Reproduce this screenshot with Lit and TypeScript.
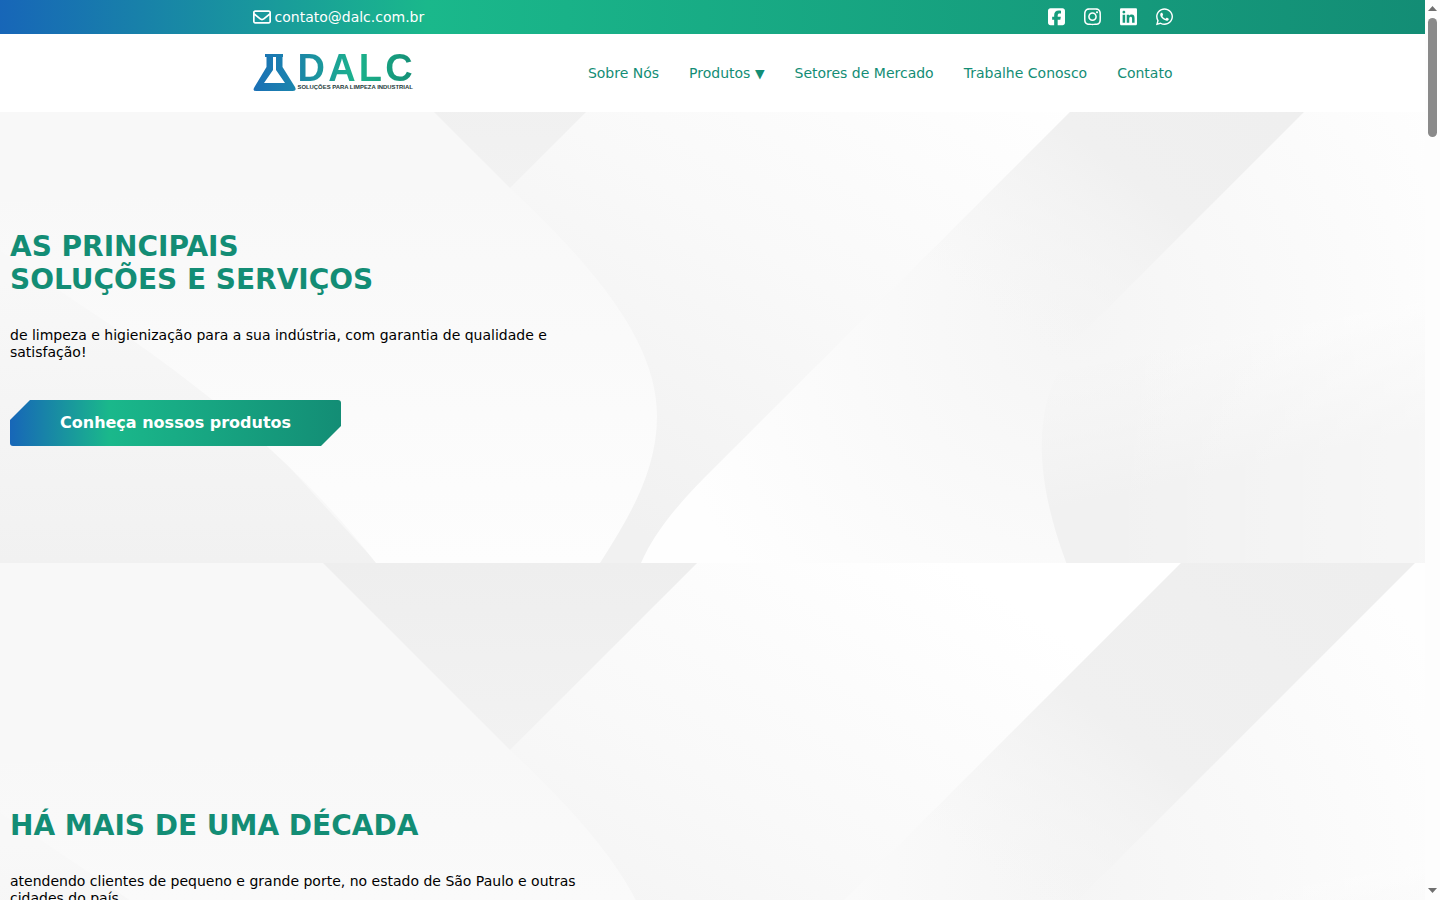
import { LitElement, html, css, svg } from "lit";
import { customElement } from "lit/decorators.js";

const ICONS = {
  envelope: { vb: "0 0 512 512", d: "M64 112c-8.8 0-16 7.2-16 16v22.1L220.5 291.7c20.7 17 50.4 17 71.1 0L464 150.1V128c0-8.8-7.2-16-16-16H64zM48 212.2V384c0 8.8 7.2 16 16 16H448c8.8 0 16-7.2 16-16V212.2L322 328.8c-38.4 31.5-93.7 31.5-132 0L48 212.2zM0 128C0 92.7 28.7 64 64 64H448c35.3 0 64 28.7 64 64V384c0 35.3-28.7 64-64 64H64c-35.3 0-64-28.7-64-64V128z" },
  facebook: { vb: "0 0 448 512", d: "M64 32C28.7 32 0 60.7 0 96V416c0 35.3 28.7 64 64 64h98.2V334.2H109.4V256h52.8V222.3c0-87.1 39.4-127.4 125-127.4c16.2 0 44.2 3.2 55.7 6.4V172c-6-.6-16.5-1-29.6-1c-42 0-58.2 15.9-58.2 57.2V256h83.6l-14.4 78.2H255V480H384c35.3 0 64-28.7 64-64V96c0-35.3-28.7-64-64-64H64z" },
  instagram: { vb: "0 0 448 512", d: "M224.1 141c-63.6 0-114.9 51.3-114.9 114.9s51.3 114.9 114.9 114.9S339 319.5 339 255.9 287.7 141 224.1 141zm0 189.6c-41.1 0-74.7-33.5-74.7-74.7s33.5-74.7 74.7-74.7 74.7 33.5 74.7 74.7-33.6 74.7-74.7 74.7zm146.4-194.3c0 14.9-12 26.8-26.8 26.8-14.9 0-26.8-12-26.8-26.8s12-26.8 26.8-26.8 26.8 12 26.8 26.8zm76.1 27.2c-1.7-35.9-9.9-67.7-36.2-93.9-26.2-26.2-58-34.4-93.9-36.2-37-2.1-147.9-2.1-184.9 0-35.8 1.7-67.6 9.9-93.9 36.1s-34.4 58-36.2 93.9c-2.1 37-2.1 147.9 0 184.9 1.7 35.9 9.9 67.7 36.2 93.9s58 34.4 93.9 36.2c37 2.1 147.9 2.1 184.9 0 35.9-1.7 67.7-9.9 93.9-36.2 26.2-26.2 34.4-58 36.2-93.9 2.1-37 2.1-147.8 0-184.8zM398.8 388c-7.8 19.6-22.9 34.7-42.6 42.6-29.5 11.7-99.5 9-132.1 9s-102.7 2.6-132.1-9c-19.6-7.8-34.7-22.9-42.6-42.6-11.7-29.5-9-99.5-9-132.1s-2.6-102.7 9-132.1c7.8-19.6 22.9-34.7 42.6-42.6 29.5-11.7 99.5-9 132.1-9s102.7-2.6 132.1 9c19.6 7.8 34.7 22.9 42.6 42.6 11.7 29.5 9 99.5 9 132.1s2.7 102.7-9 132.1z" },
  linkedin: { vb: "0 0 448 512", d: "M416 32H31.9C14.3 32 0 46.5 0 64.3v383.4C0 465.5 14.3 480 31.9 480H416c17.6 0 32-14.5 32-32.3V64.3c0-17.8-14.4-32.3-32-32.3zM135.4 416H69V202.2h66.5V416zm-33.2-243c-21.3 0-38.5-17.3-38.5-38.5S80.9 96 102.2 96c21.2 0 38.5 17.3 38.5 38.5 0 21.3-17.2 38.5-38.5 38.5zm282.1 243h-66.4V312c0-24.8-.5-56.7-34.5-56.7-34.6 0-39.9 27-39.9 54.9V416h-66.4V202.2h63.7v29.2h.9c8.9-16.8 30.6-34.5 62.9-34.5 67.2 0 79.7 44.3 79.7 101.9V416z" },
  whatsapp: { vb: "0 0 448 512", d: "M380.9 97.1C339 55.1 283.2 32 223.9 32c-122.4 0-222 99.6-222 222 0 39.1 10.2 77.3 29.6 111L0 480l117.7-30.9c32.4 17.7 68.9 27 106.1 27h.1c122.3 0 224.1-99.6 224.1-222 0-59.3-25.2-115-67.1-157zm-157 341.6c-33.2 0-65.7-8.9-94-25.7l-6.7-4-69.8 18.3L72 359.2l-4.4-7c-18.5-29.4-28.2-63.3-28.2-98.2 0-101.7 82.8-184.5 184.6-184.5 49.3 0 95.6 19.2 130.4 54.1 34.8 34.9 56.2 81.2 56.1 130.5 0 101.8-84.9 184.6-186.6 184.6zm101.2-138.2c-5.5-2.8-32.8-16.2-37.9-18-5.1-1.9-8.8-2.8-12.5 2.8-3.7 5.6-14.3 18-17.6 21.8-3.2 3.7-6.5 4.2-12 1.4-32.6-16.3-54-29.1-75.5-66-5.7-9.8 5.7-9.1 16.3-30.3 1.8-3.7.9-6.9-.5-9.7-1.4-2.8-12.5-30.1-17.1-41.2-4.5-10.8-9.1-9.3-12.5-9.5-3.2-.2-6.9-.2-10.6-.2-3.7 0-9.7 1.4-14.8 6.9-5.1 5.6-19.4 19-19.4 46.3 0 27.3 19.9 53.7 22.6 57.4 2.8 3.7 39.1 59.7 94.8 83.8 35.2 15.2 49 16.5 66.6 13.9 10.7-1.6 32.8-13.4 37.4-26.4 4.6-13 4.6-24.1 3.2-26.4-1.3-2.5-5-3.9-10.5-6.6z" },
};

type IconName = keyof typeof ICONS;

const icon = (name: IconName, cls: string) =>
  html`<svg class=${cls} viewBox=${ICONS[name].vb} fill="currentColor"><path d=${ICONS[name].d}></path></svg>`;

const pattern = (y: number, h: number) => html`
  <svg class="pattern" viewBox="0 ${y} 1425 ${h}" preserveAspectRatio="none">
    <defs>
      <linearGradient id="gWedge" gradientUnits="userSpaceOnUse" x1="510" y1="0" x2="510" y2="187">
        <stop offset="0" stop-color="#eeeeee"></stop><stop offset="1" stop-color="#f2f2f2"></stop>
      </linearGradient>
      <linearGradient id="gMid" gradientUnits="userSpaceOnUse" x1="950" y1="0" x2="620" y2="520">
        <stop offset="0" stop-color="#ffffff"></stop><stop offset=".5" stop-color="#f9f9f9"></stop><stop offset="1" stop-color="#f1f1f1"></stop>
      </linearGradient>
      <linearGradient id="gLens" gradientUnits="userSpaceOnUse" x1="510" y1="187" x2="510" y2="562">
        <stop offset="0" stop-color="#f8f8f8"></stop><stop offset="1" stop-color="#fdfdfd"></stop>
      </linearGradient>
      <linearGradient id="gLeft" gradientUnits="userSpaceOnUse" x1="200" y1="280" x2="200" y2="562">
        <stop offset="0" stop-color="#f8f8f8"></stop><stop offset="1" stop-color="#f1f1f1"></stop>
      </linearGradient>
      <linearGradient id="gBand" gradientUnits="userSpaceOnUse" x1="1300" y1="-60" x2="1000" y2="320">
        <stop offset="0" stop-color="#eeeeee"></stop>
        <stop offset=".6" stop-color="#f0f0f0"></stop>
        <stop offset="1" stop-color="#f4f4f4" stop-opacity="0"></stop>
      </linearGradient>
      <radialGradient id="gRight" gradientUnits="userSpaceOnUse" cx="1080" cy="320" r="420">
        <stop offset="0" stop-color="#f5f5f5"></stop><stop offset="1" stop-color="#fefefe"></stop>
      </radialGradient>
      <linearGradient id="gFade" gradientUnits="userSpaceOnUse" x1="1200" y1="330" x2="1230" y2="470">
        <stop offset="0" stop-color="#f1f1f1" stop-opacity="0"></stop><stop offset="1" stop-color="#f1f1f1"></stop>
      </linearGradient>
      <linearGradient id="gLight" gradientUnits="userSpaceOnUse" x1="1100" y1="0" x2="1425" y2="0">
        <stop offset="0" stop-color="#ffffff" stop-opacity="0"></stop><stop offset="1" stop-color="#ffffff" stop-opacity=".4"></stop>
      </linearGradient>
    </defs>
    ${svg`
      <rect x="0" y="0" width="1425" height="1000" fill="#f8f8f8"></rect>
      <polygon points="1181,0 1425,0 1425,1000 620,1000 620,561" fill="url(#gRight)"></polygon>
      <path d="M697 0 L1181 0 L720 461 C680 500 655 530 641 562 L600 562 L510 187 Z" fill="url(#gMid)"></path>
      <polygon points="0,250 90,310 190,370 275,450 320,500 376,561 420,700 0,700" fill="url(#gLeft)"></polygon>
      <path d="M510 187 C610 280 657 350 657 415 C657 470 630 515 600 562 L376 562 C320 490 240 410 90 310 L0 250 L0 200 Z" fill="url(#gLens)"></path>
      <polygon points="323,0 697,0 510,187" fill="url(#gWedge)"></polygon>
      <polygon points="1181,0 1415,0 1000,415 766,415" fill="url(#gBand)"></polygon>
      <path d="M1058 371 C1038 410 1032 470 1066 561 L1120 700 L1425 700 L1425 300 Z" fill="url(#gFade)"></path>
      <path d="M1058 371 C1038 410 1032 470 1066 561 L1120 700 L1425 700 L1425 300 Z" fill="url(#gLight)"></path>
    `}
  </svg>
`;

@customElement("app-root")
export class AppRoot extends LitElement {
  static styles = css`
    :host {
      display: block;
      box-sizing: border-box;
      padding-right: 15px;
      font-family: "DejaVu Sans", sans-serif;
      font-size: 14px;
      color: #000;
    }
    a {
      color: inherit;
      text-decoration: none;
    }
    .topbar {
      height: 34px;
      background: linear-gradient(90deg, #1766b8 0%, #1ab88b 30%, #138d75 100%);
      color: #fff;
    }
    .wrap {
      width: 920px;
      margin: 0 auto;
      height: 100%;
      display: flex;
      align-items: center;
      justify-content: space-between;
    }
    .mail {
      display: flex;
      align-items: center;
      gap: 4px;
    }
    .ic-mail {
      width: 18px;
      height: 18px;
    }
    .social {
      display: flex;
      gap: 19px;
      margin-right: -0.5px;
    }
    .ic-soc {
      display: block;
      width: 17px;
      height: 19.4px;
    }
    .header {
      height: 78px;
      background: #fff;
    }
    .logo {
      display: flex;
      align-items: flex-start;
      width: 161px;
      height: 38px;
    }
    .flask {
      width: 44px;
      height: 38px;
      flex: none;
    }
    .brand {
      display: flex;
      flex-direction: column;
      margin-left: 1px;
    }
    .brand-name {
      font-family: "Liberation Sans", sans-serif;
      font-weight: 700;
      font-size: 38px;
      line-height: 28px;
      height: 30px;
      width: 116px;
      letter-spacing: 3.2px;
      background: linear-gradient(90deg, #1b85a8 0%, #1cb38c 50%, #148f76 100%);
      -webkit-background-clip: text;
      background-clip: text;
      color: transparent;
      white-space: nowrap;
    }
    .brand-tag {
      font-family: "Liberation Sans", sans-serif;
      font-weight: 700;
      font-size: 5.9px;
      line-height: 7px;
      color: #1d3a3a;
      white-space: nowrap;
    }
    nav {
      display: flex;
      gap: 30px;
      color: #138d75;
    }
    .caret {
      font-size: 12.5px;
    }
    .section {
      position: relative;
      overflow: hidden;
      box-sizing: border-box;
    }
    .pattern {
      position: absolute;
      inset: 0;
      width: 100%;
      height: 100%;
    }
    .content {
      position: relative;
      width: 600px;
      margin-left: 10px;
    }
    .hero {
      height: 451px;
      padding-top: 118px;
    }
    .about {
      height: 673px;
      padding-top: 246px;
    }
    h1 {
      margin: 0 0 31px;
      font-size: 28px;
      line-height: 33px;
      font-weight: 700;
      color: #138d75;
    }
    p {
      margin: 0;
      line-height: 17px;
    }
    .cta {
      display: inline-block;
      margin-top: 39px;
      width: 331px;
      height: 46px;
      box-sizing: border-box;
      padding-left: 50px;
      line-height: 45px;
      font-size: 16px;
      font-weight: 700;
      color: #fff;
      border-radius: 3px;
      background: linear-gradient(90deg, #1766b8 0%, #1ab88b 30%, #138d75 100%);
      clip-path: polygon(20px 0, 100% 0, 100% calc(100% - 20px), calc(100% - 20px) 100%, 0 100%, 0 20px);
    }
    .scrollbar {
      position: fixed;
      top: 0;
      right: 0;
      bottom: 0;
      width: 15px;
      background: #fdfdfd;
      display: flex;
      flex-direction: column;
      align-items: center;
      padding: 6px 0 7px;
      box-sizing: border-box;
    }
    .arrow {
      width: 9px;
      height: 5px;
      background: #6f6f6f;
      flex: none;
    }
    .arrow.up {
      clip-path: polygon(50% 0, 100% 100%, 0 100%);
    }
    .arrow.down {
      clip-path: polygon(0 0, 100% 0, 50% 100%);
      margin-top: auto;
    }
    .thumb {
      width: 9px;
      height: 119px;
      margin-top: 7px;
      border-radius: 4.5px;
      background: #8a8a8a;
      flex: none;
    }
  `;

  render() {
    return html`
      <div class="topbar">
        <div class="wrap">
          <a class="mail" href="#">${icon("envelope", "ic-mail")}contato@dalc.com.br</a>
          <div class="social">
            ${(["facebook", "instagram", "linkedin", "whatsapp"] as IconName[]).map(
              (n) => html`<a href="#">${icon(n, "ic-soc")}</a>`
            )}
          </div>
        </div>
      </div>
      <div class="header">
        <div class="wrap">
          <a class="logo" href="#">
            <svg class="flask" viewBox="0 0 44 38">
              <defs>
                <linearGradient id="fl" x1="0" y1="0" x2="1" y2="0">
                  <stop offset="0" stop-color="#1a6fb5"></stop>
                  <stop offset="1" stop-color="#1b86ad"></stop>
                </linearGradient>
              </defs>
              <path fill="url(#fl)" fill-rule="evenodd" d="M12 0H30V3H29.5V13L42 33Q44 37 40 37H3Q-1 37 1.5 33L13.5 13V3H12ZM20 3V16L11 29H32L23 16V3Z"></path>
            </svg>
            <span class="brand">
              <span class="brand-name">DALC</span>
              <span class="brand-tag">SOLUÇÕES PARA LIMPEZA INDUSTRIAL</span>
            </span>
          </a>
          <nav>
            <a href="#">Sobre Nós</a>
            <a href="#">Produtos <span class="caret">▼</span></a>
            <a href="#">Setores de Mercado</a>
            <a href="#">Trabalhe Conosco</a>
            <a href="#">Contato</a>
          </nav>
        </div>
      </div>
      <section class="section hero">
        ${pattern(111, 451)}
        <div class="content">
          <h1>AS PRINCIPAIS<br />SOLUÇÕES E SERVIÇOS</h1>
          <p>de limpeza e higienização para a sua indústria, com garantia de qualidade e satisfação!</p>
          <a class="cta" href="#">Conheça nossos produtos</a>
        </div>
      </section>
      <section class="section about">
        ${pattern(0, 673)}
        <div class="content">
          <h1>HÁ MAIS DE UMA DÉCADA</h1>
          <p>atendendo clientes de pequeno e grande porte, no estado de São Paulo e outras cidades do país.</p>
        </div>
      </section>
      <div class="scrollbar" aria-hidden="true">
        <div class="arrow up"></div>
        <div class="thumb"></div>
        <div class="arrow down"></div>
      </div>
    `;
  }
}
